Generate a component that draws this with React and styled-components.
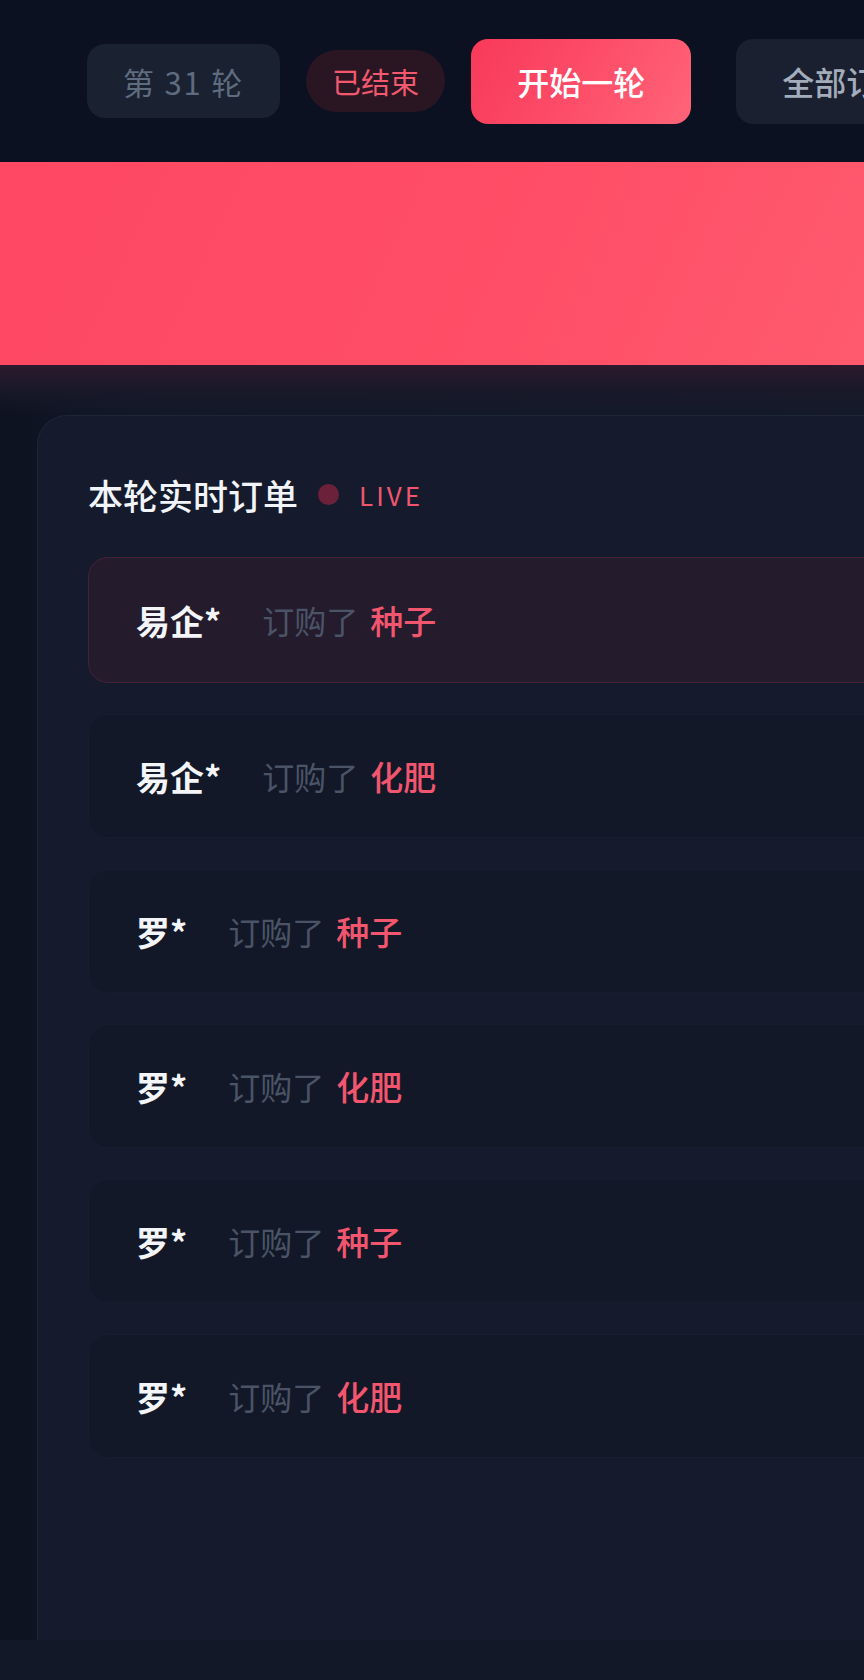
import React from 'react'
import styled, { createGlobalStyle } from 'styled-components'

const GlobalStyle = createGlobalStyle`
  html, body {
    margin: 0;
    padding: 0;
    background: #111827;
    overflow-x: hidden;
  }
  body {
    font-family: "Noto Sans CJK SC", "Noto Sans", sans-serif;
  }
  * { box-sizing: border-box; }
`;

const orders = [
  { name: '易企*', item: '种子', fresh: true },
  { name: '易企*', item: '化肥' },
  { name: '罗*', item: '种子' },
  { name: '罗*', item: '化肥' },
  { name: '罗*', item: '种子' },
  { name: '罗*', item: '化肥' },
];

function App() {
  return (
    <Page>
      <GlobalStyle />
      <Toolbar>
        <RoundTag>第 31 轮</RoundTag>
        <StatusPill>已结束</StatusPill>
        <ActionButton primary>开始一轮</ActionButton>
        <ActionButton>全部订单</ActionButton>
      </Toolbar>

      <Banner />

      <Content>
        <Panel>
          <PanelHeader>
            <PanelTitle>本轮实时订单</PanelTitle>
            <LiveDot />
            <LiveText>LIVE</LiveText>
          </PanelHeader>

          <OrderList>
            {orders.map((o, i) => (
              <OrderRow key={i} fresh={o.fresh}>
                <Buyer>{o.name}</Buyer>
                <Verb>订购了</Verb>
                <Product>{o.item}</Product>
              </OrderRow>
            ))}
          </OrderList>
        </Panel>
      </Content>
      <Footer />
    </Page>
  )
}

export default App;

const Page = styled.div`
  width: 100%;
  min-height: 1680px;
  display: flex;
  flex-direction: column;
  background: #111827;
  overflow: hidden;
`;

const Toolbar = styled.div`
  height: 162px;
  background: #0b1120;
  display: flex;
  align-items: center;
  gap: 26px;
  padding: 0 0 0 87px;
  white-space: nowrap;
  flex-shrink: 0;
`;

const RoundTag = styled.div`
  height: 74px;
  padding: 0 36px;
  display: flex;
  align-items: center;
  border-radius: 18px;
  background: #1a2131;
  color: #5f6b7f;
  font-size: 31px;
  letter-spacing: 1.8px;
`;

const StatusPill = styled.div`
  height: 62px;
  padding: 0 26px;
  display: flex;
  align-items: center;
  border-radius: 31px;
  background: #2a1522;
  color: #f2596f;
  font-size: 29px;
`;

const ActionButton = styled.div`
  height: 85px;
  padding: 0 46px;
  display: flex;
  align-items: center;
  border-radius: 17px;
  font-size: 32px;
  font-weight: 500;
  color: ${p => (p.primary ? '#ffffff' : '#a3acbb')};
  background: ${p =>
    p.primary
      ? 'linear-gradient(120deg, #f8395a 0%, #fd4d68 50%, #ff6478 100%)'
      : '#1a2030'};
  margin-left: ${p => (p.primary ? 0 : '19px')};
  flex-shrink: 0;
`;

const Banner = styled.div`
  height: 203px;
  flex-shrink: 0;
  background: linear-gradient(115deg, #ff4863 0%, #ff4d66 55%, #ff5a6e 100%);
`;

const Content = styled.div`
  height: 1275px;
  flex-shrink: 0;
  padding: 50px 0 0 37px;
  background:
    linear-gradient(to bottom, #2c1a2d 0px, #1a1829 22px, rgba(15, 21, 36, 0) 50px),
    linear-gradient(to right, #0d1220 0px, #111828 120px, #141a2a 100%);
  display: flex;
`;

const Panel = styled.div`
  flex: 1;
  margin-right: -60px;
  background: #151b2c;
  border: 1px solid #1e2537;
  border-bottom: none;
  border-radius: 30px 0 0 0;
  padding: 52px 0 0 50px;
  display: flex;
  flex-direction: column;
`;

const PanelHeader = styled.div`
  height: 52px;
  display: flex;
  align-items: center;
`;

const PanelTitle = styled.div`
  color: #f1f4f8;
  font-size: 35px;
  font-weight: 500;
  margin-right: 20px;
`;

const LiveDot = styled.span`
  width: 21px;
  height: 21px;
  border-radius: 50%;
  background: #6a2139;
  margin-right: 20px;
`;

const LiveText = styled.span`
  color: #f2566e;
  font-size: 26px;
  letter-spacing: 3px;
`;

const OrderList = styled.div`
  margin-top: 37px;
  display: flex;
  flex-direction: column;
  gap: 31px;
`;

const OrderRow = styled.div`
  height: ${p => (p.fresh ? '126px' : '124px')};
  display: flex;
  align-items: center;
  padding-left: 47px;
  border-radius: 20px;
  background: ${p => (p.fresh ? '#241b2d' : '#121827')};
  border: 1px solid ${p => (p.fresh ? '#47203a' : '#161d2d')};
  white-space: nowrap;
`;

const Buyer = styled.span`
  color: #f3f5f9;
  font-size: 34px;
  font-weight: 600;
  margin-right: 41px;
`;

const Verb = styled.span`
  color: #4a5466;
  font-size: 32px;
  margin-right: 12px;
`;

const Product = styled.span`
  color: #f2566e;
  font-size: 33px;
  font-weight: 500;
`;

const Footer = styled.div`
  flex: 1;
  background: #121827;
`;
